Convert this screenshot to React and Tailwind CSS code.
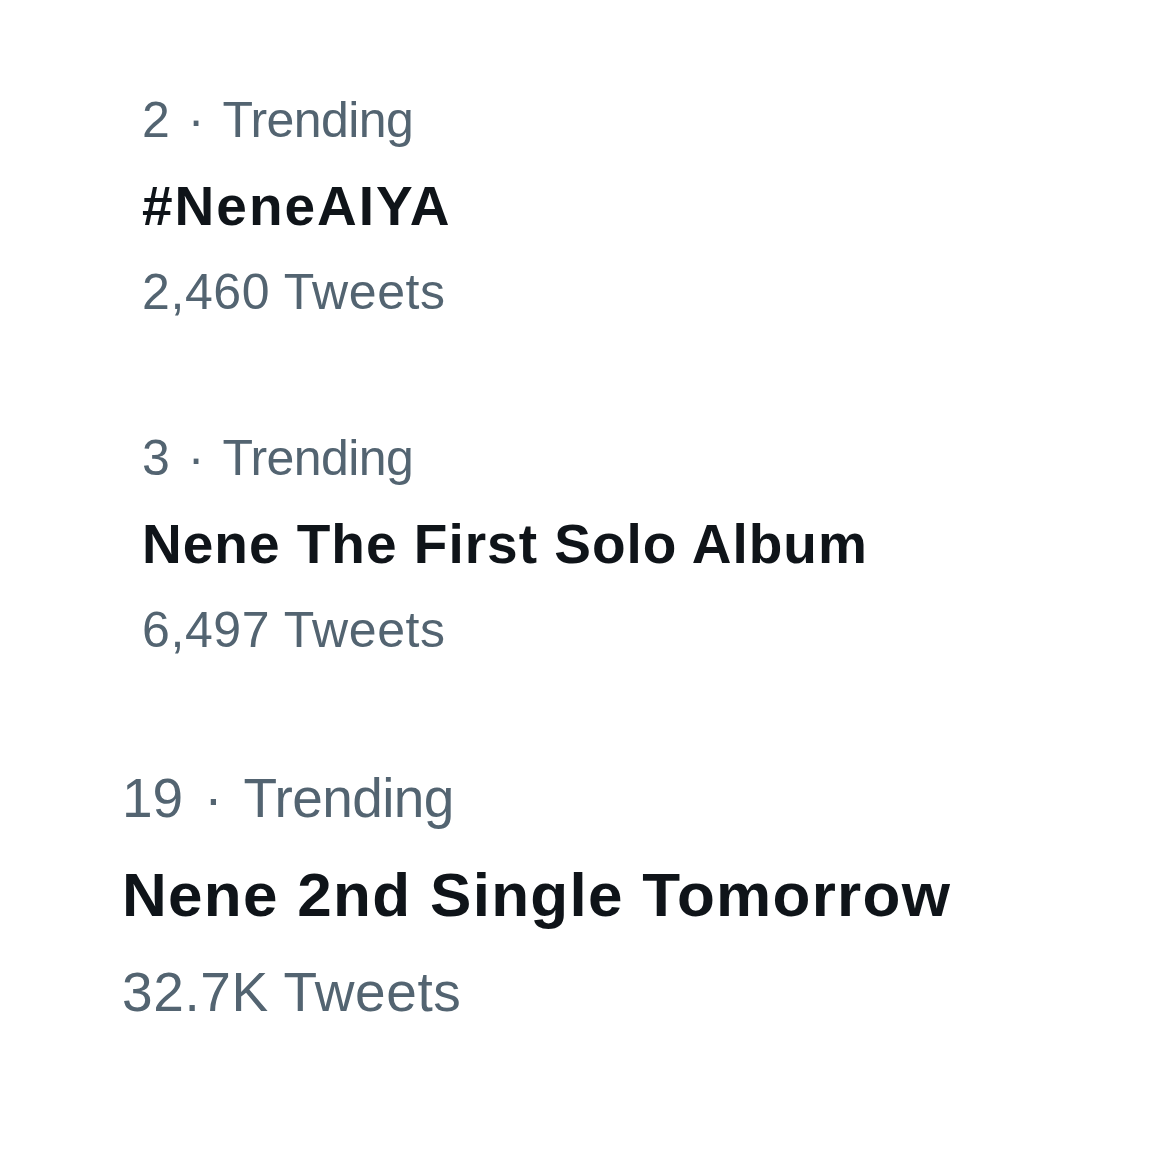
import React from 'react';

const trends = [
  {
    rank: '2',
    title: '#NeneAIYA',
    count: '2,460 Tweets',
    pad: 'pl-[142px]',
    meta: 'text-[50px] leading-[86px]',
    head: 'text-[55px] leading-[86px] tracking-[2px]',
    rankGap: 'mx-[18px]',
  },
  {
    rank: '3',
    title: 'Nene The First Solo Album',
    count: '6,497 Tweets',
    pad: 'pl-[142px]',
    meta: 'text-[50px] leading-[86px]',
    head: 'text-[55px] leading-[86px] tracking-[1px]',
    rankGap: 'mx-[18px]',
  },
  {
    rank: '19',
    title: 'Nene 2nd Single Tomorrow',
    count: '32.7K Tweets',
    pad: 'pl-[122px]',
    meta: 'text-[55px] leading-[96px]',
    head: 'text-[62px] leading-[98px] tracking-[1.3px]',
    rankGap: 'mx-[21px]',
  },
];

function TrendItem({ t }) {
  return (
    <div className={t.pad}>
      <div className={`${t.meta} text-[#536471] whitespace-nowrap`}>
        <span>{t.rank}</span>
        <span className={`inline-block ${t.rankGap}`}>·</span>
        <span className="tracking-[-0.6px]">Trending</span>
      </div>
      <div className={`${t.head} font-bold text-[#0f1419] whitespace-nowrap`}>{t.title}</div>
      <div className={`${t.meta} text-[#536471] whitespace-nowrap tracking-[0.6px]`}>{t.count}</div>
    </div>
  );
}

export default function App() {
  return (
    <div
      className="w-[1170px] h-[1170px] bg-white overflow-hidden"
      style={{ fontFamily: '"Liberation Sans", Arial, sans-serif' }}
    >
      <div className="pt-[77px] flex flex-col">
        <TrendItem t={trends[0]} />
        <div className="mt-[80px]">
          <TrendItem t={trends[1]} />
        </div>
        <div className="mt-[77px]">
          <TrendItem t={trends[2]} />
        </div>
      </div>
    </div>
  );
}
